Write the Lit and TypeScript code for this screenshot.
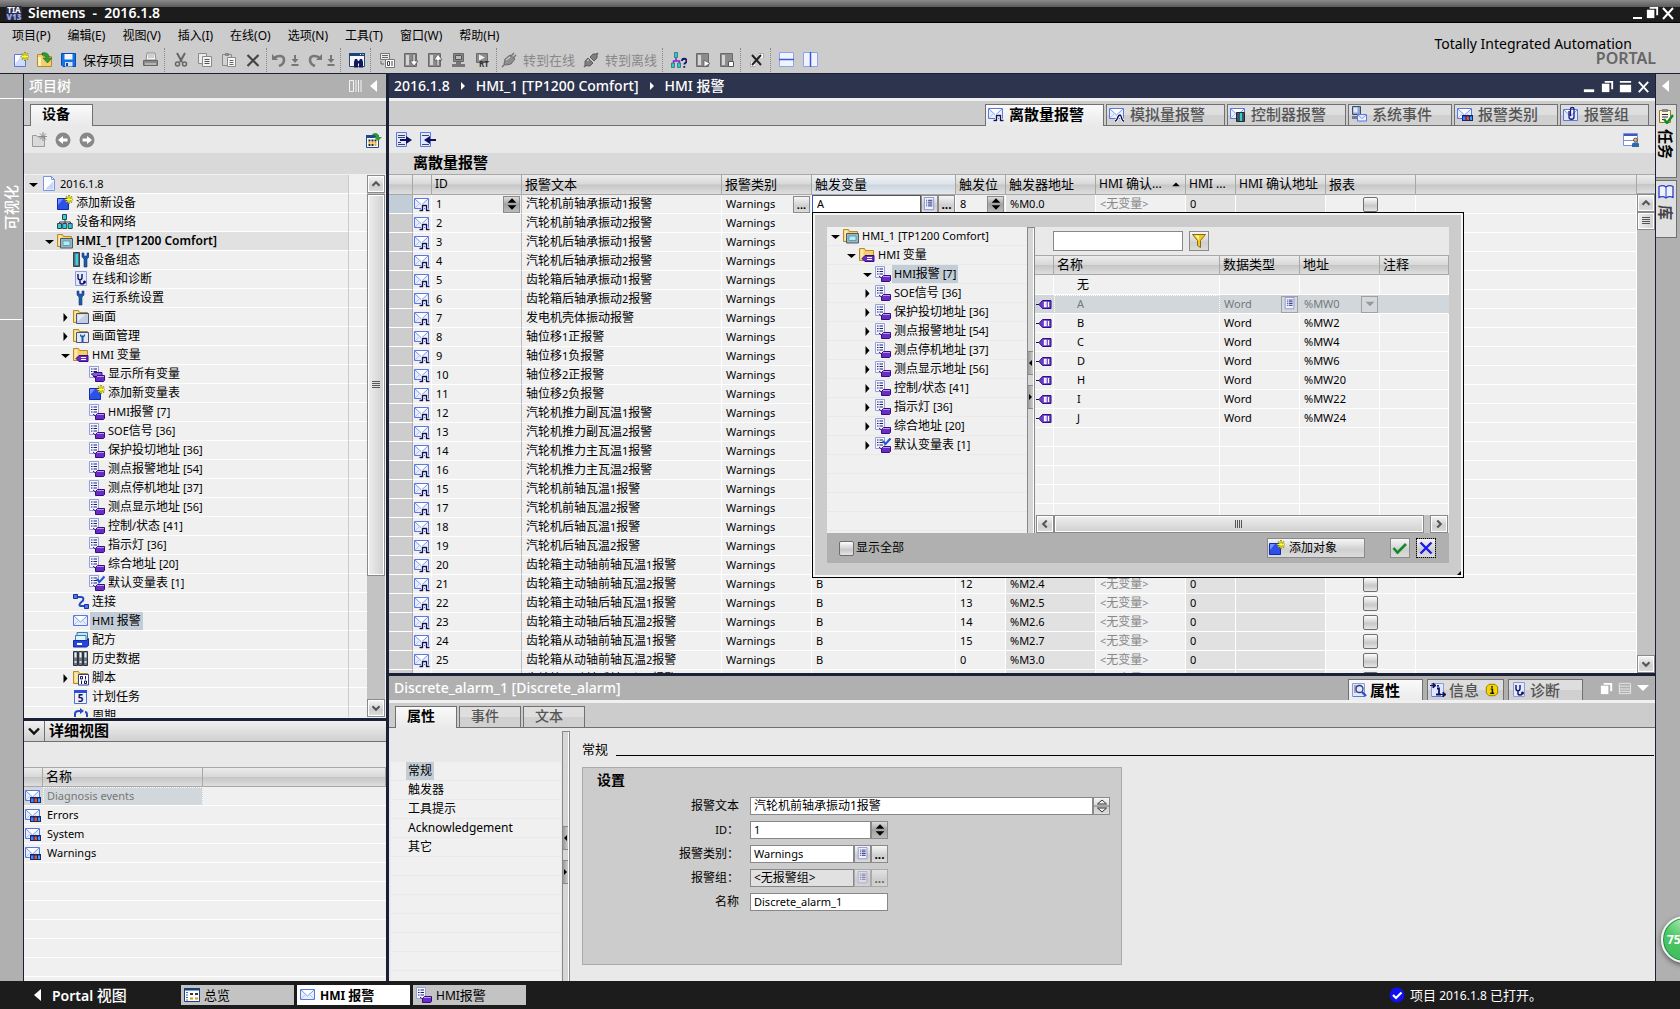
import { LitElement, html, svg, css, nothing, TemplateResult, SVGTemplateResult } from "lit";
import { customElement, property, state } from "lit/decorators.js";
import { classMap } from "lit/directives/class-map.js";
import { styleMap } from "lit/directives/style-map.js";

/* ---------- icon fragments ---------- */

const env = svg`<path d="M.5 2.500h14v10H.5z" fill="#e6eeff" stroke="#5b78e0"/><path d="M1 3l6.500 6L14 3" fill="#fff" stroke="#7a95ee"/><path d="M1 12l4.500-4.500M14 12L9.500 7.500" stroke="#b5c5f7" fill="none"/>`;
const sheet = svg`<path d="M.5 .5h9v11h-9z" fill="#f4f6ff" stroke="#93a0dc"/><path d="M2 3h1.500M2 5.500h1.500M2 8h1.500M4.500 3H8M4.500 5.500H8M4.500 8H8" stroke="#1d1d6e"/>`;
const tagBlock = svg`<path d="M4 10l3 2.500" stroke="#31107e"/><path d="M6.500 11.500l2-2h7v5l-1 1h-8z" fill="#6a2cc4" stroke="#31107e"/><path d="M8 10.500h7" stroke="#b99af0"/>`;
const folder = svg`<path d="M.5 13.500v-12h5l1 2h8v10z" fill="#f3cf6d" stroke="#b98a1e"/><path d="M1.500 2.500h3v10h-3z" fill="#fbe9ad"/>`;
const star = svg`<path d="M12 0v9M7.500 4.500h9M9 1.500l6 6M15 1.500l-6 6" stroke="#8a8400" stroke-width="1.600"/><path d="M12 1v7M8.500 4.500h7M9.500 2l5 5M14.500 2l-5 5" stroke="#ffff3a"/>`;
const wrench = svg`<path d="M2 0v4l2 2v8h3V6l2-2V0H7v3H4V0z" fill="#1e5aa8" stroke="#123a78" stroke-width=".6"/>`;
const grayBox = svg`<path d="M1.500 1.500h12v13h-12z" fill="#8b8b8b" stroke="#6a6a6a"/><path d="M3 3h3v10H3z" fill="#d5d5d5"/>`;
const page = svg`<path d="M1.500 1.500h12v13h-12z" fill="#dfe8ff" stroke="#8b9be0"/><path d="M2 14.500h12" stroke="#5b78e0"/>`;
const scope = svg`<path d="M4 3v3.500c0 3 4 3 4 0V3M6 9v2.500c0 2 4 2 4 0" fill="none" stroke="#12125e" stroke-width="1.400"/><circle cx="10.500" cy="11" r="1.500" fill="#12125e"/>`;

const ICONS: Record<string, SVGTemplateResult> = {
  envelope: svg`${env}`,
  alarm: svg`${env}<path d="M5.500 14.500h3v-5h4v5h3" stroke="#fff" stroke-width="3" fill="none"/><path d="M5.500 14.500h3v-5h4v5h3" stroke="#101050" stroke-width="1.400" fill="none"/>`,
  analog: svg`${env}<path d="M6 15c3 0 2-6 5-6 2 0 1 6 4 6" stroke="#fff" stroke-width="3" fill="none"/><path d="M6 15c3 0 2-6 5-6 2 0 1 6 4 6" stroke="#101050" stroke-width="1.400" fill="none"/>`,
  controller: svg`${env}<path d="M6.500 6.500h8v9h-8z" fill="#44525e" stroke="#1d2a34"/><path d="M10 7h2v8h-2z" fill="#2ad0d8"/>`,
  sysevent: svg`<path d="M1.500 .5h8v8h-8z" fill="#8fa3c8" stroke="#3b4a70"/><path d="M2.500 1.500h4v5h-4z" fill="#dfe8fa"/><path d="M1 10h9v3H1z" fill="#6c7b9c"/><path d="M6.500 8.500h9v6.500h-9z" fill="#e6eeff" stroke="#5b78e0"/><path d="M7 9l4 3.500L15 9" fill="none" stroke="#7a95ee"/>`,
  alarmclass: svg`${env}<path d="M5 9h11v6H5z" fill="#15296e"/><path d="M6 10.500h2.500v3.500H6z" fill="#4b7dff"/><path d="M9.500 10.500H12v3.500H9.500z" fill="#f0501e"/><path d="M13 10.500h2v3.500h-2z" fill="#3fa0ff"/>`,
  group: svg`<path d="M.5 3.500h14v11H.5z" fill="#dfe7ff" stroke="#5b78e0"/><path d="M1 4l6.500 6L14 4" fill="#fff" stroke="#7a95ee"/><path d="M7.500 10V3c0-2 3.500-2 3.500 0v8c0 3-5 3-5 0V5" fill="none" stroke="#1a1a78" stroke-width="1.300"/>`,
  tagtable: svg`${sheet}${tagBlock}`,
  tagdefault: svg`${sheet}${tagBlock}<path d="M8 4l2.500 3L15.500 1.500" fill="none" stroke="#1c55d8" stroke-width="2"/>`,
  tagall: svg`${sheet}<path d="M3 8.500l2-2h8v4H5z" fill="#8a56d8" stroke="#31107e"/>${tagBlock}`,
  tag: svg`<path d="M0 8.500h3" stroke="#101050"/><path d="M3 8.500l3.500-4H15v8H6.500z" fill="#6a3cc8" stroke="#2d0f80"/><path d="M8.500 6.500h1.500v4H8.500zM12.500 6v5" fill="none" stroke="#fff" stroke-width="1.300"/>`,
  add: svg`<path d="M.5 3.500h11v11H.5z" fill="#2c50e8" stroke="#1428b0"/><path d="M1 4h5L1 10z" fill="#6f92ff"/>${star}`,
  network: svg`<path d="M8 5v3M2.500 11V8h11v3M8 8v3" stroke="#33424e" fill="none"/><path d="M5.500 .5h4v5h-4zM.5 9.500h4v5h-4zM5.700 9.500h4v5h-4zM11.200 9.500h4v5h-4z" fill="#2fd0d2" stroke="#33424e"/>`,
  hmi: svg`${folder}<path d="M3.500 5.500h12v9.500h-12z" fill="#9fb3c0" stroke="#4a5a66"/><path d="M6 8h7v4.500H6z" fill="#a8f0fa" stroke="#4a8a9a" stroke-width=".7"/>`,
  devconf: svg`<path d="M.5 .5h6v14h-6z" fill="#5c6c78" stroke="#34424c"/><path d="M2.500 2h2.500v11H2.500z" fill="#2fd8e4"/><g transform="translate(7 1)">${wrench}</g>`,
  diag: svg`<path d="M2.500 .5h11v14h-11z" fill="#e2e9ff" stroke="#8b9be0"/><g transform="translate(1 0)">${scope}</g>`,
  wrench: svg`<g transform="translate(2 1)">${wrench}</g>`,
  fscreen: svg`${folder}<path d="M3.500 4.500h12v10h-12z" fill="#c3cfe6" stroke="#4a566e"/><path d="M4.500 5.500h8l-8 7z" fill="#e4ebf8"/>`,
  fwrench: svg`${folder}<path d="M3.500 4.500h12v10h-12z" fill="#e2e9f6" stroke="#4a566e"/><path d="M7 6v2l1.500 1.500V14h2V9.500L12 8V6l-1.500 1.500h-2z" fill="#1e5aa8"/>`,
  ftag: svg`${folder}<path d="M3 11.500l3-3h9v6H6z" fill="#6a2cc4" stroke="#31107e"/><path d="M8 10.500h5M8 12.500h5" stroke="#fff"/>`,
  connect: svg`<path d="M3 3h5c3 0 3 3 1 4.500S5 12 8 12h5" fill="none" stroke="#2448c8" stroke-width="2"/><path d="M.5 .5h4v4h-4zM11.500 10.500h4v4h-4z" fill="#4a78f0" stroke="#1a2fa0"/>`,
  recipe: svg`<path d="M4 .5h10.500v8H4z" fill="#bfe8f4" stroke="#3b7aa8"/><path d="M2.500 3.500h10.500v6H2.500z" fill="#def4fa" stroke="#3b7aa8"/><path d="M.5 8.500h13l2-2v7l-2 1.500H.5z" fill="#2346e0" stroke="#1428a0"/><path d="M4 11h5v2H4z" fill="#fff"/>`,
  history: svg`<path d="M.5 .5h4v14h-4zM5.500 .5h4v14h-4zM10.500 .5h4v14h-4z" fill="#6b7380" stroke="#2e343e"/><path d="M1.500 1.500h2v5h-2zM6.500 1.500h2v5h-2zM11.500 1.500h2v5h-2z" fill="#eef0f4"/><path d="M1.500 11h2M6.500 11h2M11.500 11h2" stroke="#d8dce4" stroke-width="2"/>`,
  script: svg`${folder}<path d="M5.500 4.500h10v10.500h-10z" fill="#fff" stroke="#33428e"/><path d="M7.500 6.500h2v2.500h-2zM12.500 6v3.500M8.500 10.500v3.500M11.500 11h2v2.500h-2z" fill="none" stroke="#12125e"/>`,
  schedule: svg`<path d="M1.500 1.500h12v13h-12z" fill="#eef2ff" stroke="#5b6fd0"/><path d="M1 1h13v3H1z" fill="#2b50e0"/><text x="7.500" y="13" font-size="10" font-weight="700" text-anchor="middle" fill="#12125e" font-family="Noto Sans, sans-serif">5</text>`,
  cycle: svg`<path d="M2 14V6c0-2 2-3 4-3h2M14 14V7c0-2-1-3-2-3" fill="none" stroke="#2448c8" stroke-width="2"/><path d="M7 0v6l4-3z" fill="#2448c8"/>`,
  doc: svg`<path d="M2.500 .5h8l3 3v11h-11z" fill="#fff" stroke="#7c93e4"/><path d="M10.500 .5v3h3" fill="none" stroke="#7c93e4"/><path d="M4 13.500L12.500 5v8.500z" fill="#c8d6fc"/>`,
  newp: svg`<path d="M1.500 2.500h11v12h-11z" fill="#cddcff" stroke="#5b78e0"/><path d="M2 3h7l-7 9z" fill="#fff"/>${star}`,
  newgray: svg`<path d="M1.500 14.500v-11h4l1 1.500h7v9.500z" fill="#dadada" stroke="#9a9a9a"/><path d="M12 0v9M7.500 4.500h9M9 1.500l6 6M15 1.500l-6 6" stroke="#8a8a8a"/>`,
  open: svg`<path d="M.5 14.500v-12h5l1 2h8v10z" fill="#f3cf6d" stroke="#b98a1e"/><path d="M1 5h3v9H1z" fill="#fdf0b8"/><path d="M5 1c6-1 7 2 7 5h3l-4.500 5L6 6h3c0-2-1-3-4-3z" fill="#2f9a38" stroke="#176a20" stroke-width=".6"/>`,
  save: svg`<path d="M.5 1.500h14v13H2l-1.500-1.500z" fill="#1672e0" stroke="#0b4ab0"/><path d="M3.500 2h8v5.500h-8z" fill="#f2f7ff"/><path d="M4 10h7.500v4.500H4z" fill="#cfe0f8"/><path d="M5 11h2v3H5z" fill="#0b4ab0"/>`,
  print: svg`<path d="M4 1h8l1 7H3z" fill="#f4f4f4" stroke="#8c8c8c"/><path d="M5 3h6M5 5h6" stroke="#aaa"/><path d="M.5 8.500h14v5H.5z" fill="#8a8a8a" stroke="#666"/><path d="M2 12h11" stroke="#e0e0e0"/>`,
  cut: svg`<path d="M4 1l5 9M12 1L7 10" stroke="#666" stroke-width="2" fill="none"/><circle cx="4.500" cy="12" r="2" fill="none" stroke="#666" stroke-width="1.500"/><circle cx="11.500" cy="12" r="2" fill="none" stroke="#666" stroke-width="1.500"/>`,
  copy: svg`<path d="M1.500 1.500h8v10h-8z" fill="#ececec" stroke="#8a8a8a"/><path d="M5.500 4.500h9v10h-9z" fill="#f4f4f4" stroke="#8a8a8a"/><path d="M7.500 7.500h5M7.500 9.500h5M7.500 11.500h5" stroke="#555"/>`,
  paste: svg`<path d="M1.500 2.500h9v11h-9z" fill="#d2d2d2" stroke="#8a8a8a"/><path d="M4 1h4v3H4z" fill="#8a8a8a"/><path d="M6.500 5.500h8v9h-8z" fill="#f8f8f8" stroke="#8a8a8a"/><path d="M8.500 8.500h4M8.500 10.500h4M8.500 12.500h4" stroke="#666"/>`,
  del: svg`<path d="M2.500 3l11 11M13.500 3l-11 11" stroke="#444" stroke-width="2.200"/>`,
  find: svg`<path d="M.5 1.500h15v13H.5z" fill="#f4f6fa" stroke="#2a4a7e"/><path d="M0 1h16v3H0z" fill="#17427e"/><path d="M11 2.500h1M13.500 2.500h1" stroke="#fff"/><path d="M5 15.500V10l1-3h2l1 2h1l1-2h2l1 3v5.500h-4v-4H9v4z" fill="#12185e"/>`,
  compile: svg`<path d="M1.500 1.500h9v6h-9z" fill="#ececec" stroke="#777"/><path d="M3 3.500h6M3 5.500h6M2 9v3h3" stroke="#666" fill="none"/><path d="M6.500 7.500h9v8h-9z" fill="#fff" stroke="#777"/><path d="M8.500 9.500h2v4h-2zM13 9v5" fill="none" stroke="#444"/>`,
  download: svg`${grayBox}<path d="M10 2v7H7l4 5 4-5h-3V2z" fill="#fff" stroke="#555" stroke-width=".8"/>`,
  upload: svg`${grayBox}<path d="M10 14V8H7l4-6 4 6h-3v6z" fill="#fff" stroke="#555" stroke-width=".8"/>`,
  simulate: svg`<path d="M2.500 1.500h10v8h-10z" fill="#888" stroke="#666"/><path d="M4.500 3.500h6v4h-6z" fill="#bbb" stroke="#555"/><path d="M5 10h5v2H5zM1 12h13v3H1z" fill="#777"/>`,
  rt: svg`<path d="M1.500 1.500h11v9h-11z" fill="#8b8b8b" stroke="#6a6a6a"/><path d="M4 2.500l6 3-6 3z" fill="#eee"/><text x="4" y="15" font-size="8" font-weight="700" fill="#333" font-family="Noto Sans, sans-serif">RT</text>`,
  plug: svg`<path d="M1 15l3-3M10 4l3-3M12 6l3-3" stroke="#777" stroke-width="1.600"/><path d="M3 12l1-5 5-4 5 4-4 5-5 1z" fill="#8f8f8f" stroke="#6c6c6c"/><path d="M5 8l4-3" stroke="#ddd"/>`,
  unplug: svg`<path d="M1 15l2-2M13 3l2-2" stroke="#666" stroke-width="1.600"/><path d="M2 13.500V9l3-3 5 5-3 3zM7 5l3-3h4v4l-3 3z" fill="#7f7f7f" stroke="#5c5c5c"/><path d="M4 9l2-1.500" stroke="#ddd"/>`,
  access: svg`<path d="M5 6v3M2.500 12V9h6v3" stroke="#8a1fd0" stroke-width="1.500" fill="none"/><path d="M3.500 .5h3v5h-3zM.5 11h3v4.500h-3zM6.500 11h3v4.500h-3z" fill="#2fc8d0" stroke="#28707c" stroke-width=".8"/><path d="M11 9c0-3 4.500-3 4.500 0 0 2-2.200 2-2.200 3.500M13.300 14v1.800" stroke="#14146a" stroke-width="1.800" fill="none"/>`,
  start: svg`${grayBox}<path d="M9 8l6 3.500L9 15z" fill="#fff" stroke="#555" stroke-width=".8"/>`,
  stop: svg`${grayBox}<path d="M9.500 9.500h5v5h-5z" fill="#fff" stroke="#555"/>`,
  xref: svg`<path d="M9.500 1.500h5v5M1.500 9.500v5h5" fill="#fff" stroke="#aaa"/><path d="M10 2h4v4h-4zM2 10h4v4H2z" fill="#fff"/><path d="M3 3l9 10M12 3L3 13" stroke="#222" stroke-width="2"/>`,
  splith: svg`<path d="M.5 .5h14v14H.5z" fill="#f0f4ff" stroke="#8fa4e8"/><path d="M0 7.500h15" stroke="#3a58d8" stroke-width="1.500"/>`,
  splitv: svg`<path d="M.5 .5h14v14H.5z" fill="#f0f4ff" stroke="#8fa4e8"/><path d="M7.500 0v15" stroke="#3a58d8" stroke-width="1.500"/>`,
  back: svg`<circle cx="8" cy="8" r="7.500" fill="#888"/><path d="M12.500 6.500H8V4L3 8l5 4V9.500h4.500z" fill="#fff"/>`,
  fwd: svg`<circle cx="8" cy="8" r="7.500" fill="#888"/><path d="M3.500 6.500H8V4l5 4-5 4V9.500H3.500z" fill="#fff"/>`,
  calendar: svg`<path d="M.5 3.500h12v12H.5z" fill="#fff" stroke="#1d4a8c"/><path d="M0 3h13v3H0z" fill="#1d4a8c"/><path d="M2.500 8.500h2M5.500 8.500h2M8.500 8.500h2M2.500 13h2M5.500 13h2" stroke="#222" stroke-width="2"/><path d="M2.500 10.800h2M5.500 10.800h2M8.500 10.800h2M8.500 13h2" stroke="#f0a010" stroke-width="2"/><path d="M6 3c1-3 7-3 7 2h3l-4 4-4-4h2c0-2-2-2-4-2z" fill="#2f9a38"/>`,
  insert: svg`<path d="M.5 .5h10v14H.5z" fill="#dfe8ff" stroke="#5b78e0"/><path d="M2 3.500h7M2 5.500h7M2 10.500h3M2 12.500h7" stroke="#445"/><path d="M4 7h6V4l6 4-6 4V9H4z" fill="#101060"/>`,
  remove: svg`<path d="M.5 .5h10v14H.5z" fill="#dfe8ff" stroke="#5b78e0"/><path d="M2 3.500h7M2 12.500h7" stroke="#445"/><path d="M16 7h-6V4L4 8l6 4V9h6z" fill="#101060"/>`,
  viewcfg: svg`<path d="M.5 1.500h14v12H.5z" fill="#fff" stroke="#7d8fd8"/><path d="M1 3h13" stroke="#3a58c8" stroke-width="2"/><path d="M1 8.500h13" stroke="#7d8fd8"/><circle cx="12.500" cy="8" r="2" fill="#e8b070" stroke="#333" stroke-width=".7"/><path d="M9 15v-3c0-2 7-2 7 0v3z" fill="#2c6aa8"/>`,
  list: svg`<path d="M2.500 .5h10v13h-10z" fill="#eef1ff" stroke="#8390d8"/><path d="M4.500 3.500h1M4.500 5.500h1M4.500 7.500h1M4.500 9.500h1M6.500 3.500H11M6.500 5.500H11M6.500 7.500H11M6.500 9.500H11" stroke="#22226e"/>`,
  filter: svg`<path d="M1.500 1.500h13l-5 6v7l-3-2v-5z" fill="#f0cc20" stroke="#8a6a08"/><path d="M4 2.500h4v5z" fill="#fff3a0"/>`,
  ok: svg`<path d="M1.500 8l4 4.500L14 4" fill="none" stroke="#118a2a" stroke-width="2.600"/>`,
  cancel: svg`<path d="M2.500 2.500l11 11M13.500 2.500l-11 11" stroke="#1a1af0" stroke-width="2.400"/>`,
  props: svg`${page}<path d="M3 4h3M3 6h2M3 8h2M3 10h3" stroke="#667"/><circle cx="8.500" cy="7" r="3.500" fill="#dfe9ff" stroke="#333a70" stroke-width="1.300"/><path d="M11 10l4 4" stroke="#2458b8" stroke-width="2.400"/>`,
  info: svg`${page}<path d="M0 3.500h4M3 1l3 2.500L3 6zM11 12.500h3M13 10l3 2.500-3 2.500z" fill="#101060" stroke="#101060"/><path d="M7 6.500h2v6M6 12.500h5M8 3v1.800" stroke="#101060" stroke-width="1.800" fill="none"/>`,
  warn: svg`<path d="M4.500 1.500h7l3 3v7l-3 3h-7l-3-3v-7z" fill="#f7d400" stroke="#8a7400"/><path d="M6.500 7H8.500v4.500M6 11.700h4.500M8 3.500v2" stroke="#111" stroke-width="1.700" fill="none"/>`,
  overview: svg`<path d="M.5 1.500h15v13H.5z" fill="#fff" stroke="#17427e"/><path d="M0 1h16v2.500H0z" fill="#17427e"/><path d="M2 5.500h2M2 8h2M2 10.500h2M2 13h2" stroke="#3a6ab0"/><path d="M6 6h3v2H6zM11 6h3v2h-3z" fill="#333"/><path d="M6 10.500h3v2H6zM11 10.500h3v2h-3z" fill="#e09010"/>`,
  done: svg`<circle cx="8" cy="8" r="7.500" fill="#1010f0"/><path d="M4 8l3 3 5.500-5.500" fill="none" stroke="#fff" stroke-width="2.200"/>`,
  task: svg`<path d="M1.500 2.500h11v12h-11z" fill="#fff8d8" stroke="#9a7a28"/><path d="M4 1h6v3H4z" fill="#888"/><path d="M4 6.500h6M4 9h6M4 11.500h3" stroke="#22226e"/><path d="M6 11l3 4 6-8" fill="none" stroke="#118a2a" stroke-width="2.400"/>`,
  book: svg`<path d="M8 3C6 1.500 3 1.500 1 2.500v11c2-1 5-1 7 .5 2-1.500 5-1.500 7-.5v-11C13 1.500 10 1.500 8 3z" fill="#eef2ff" stroke="#2b3fc8" stroke-width="1.300"/><path d="M8 3v11" stroke="#2b3fc8"/>`,
  triL: svg`<path d="M11 2v12L4 8z" fill="currentColor"/>`,
  triR: svg`<path d="M6 4v8l4-4z" fill="currentColor"/>`,
  triD: svg`<path d="M2 5h12l-6 6z" fill="currentColor"/>`,
  triU: svg`<path d="M3 11h10L8 6z" fill="currentColor"/>`,
  nodeR: svg`<path d="M6.500 4v9l4-4.500z" fill="#000"/>`,
  nodeD: svg`<path d="M4 7h9l-4.500 4z" fill="#000"/>`,
  chevU: svg`<path d="M4 10l4-4 4 4" fill="none" stroke="#555" stroke-width="2.400"/>`,
  chevD: svg`<path d="M4 6l4 4 4-4" fill="none" stroke="#555" stroke-width="2.400"/>`,
  chevL: svg`<path d="M10 4L6 8l4 4" fill="none" stroke="#555" stroke-width="2.400"/>`,
  chevR: svg`<path d="M6 4l4 4-4 4" fill="none" stroke="#555" stroke-width="2.400"/>`,
  chevB: svg`<path d="M3 5.500l5 5 5-5" fill="none" stroke="#111" stroke-width="2.400"/>`,
  spin: svg`<path d="M3 6.500h10L8 1.500zM3 9.500h10l-5 5z" fill="#000"/>`,
  expand: svg`<path d="M0 8h16" stroke="#777"/><path d="M3.500 6h9L8 2zM3.500 10h9L8 14z" fill="#eee" stroke="#333"/>`,
  min: svg`<path d="M2 11h11v3H2z" fill="#fff"/>`,
  minthin: svg`<path d="M4 12h9v2H4z" fill="#fff"/>`,
  restore: svg`<path d="M5 2h9v9h-2V4H5z" fill="#fff"/><path d="M2 5h8v9H2z" fill="#fff"/>`,
  max: svg`<path d="M2 2h12v2H2zM2 6h12v8H2z" fill="#fff"/>`,
  close: svg`<path d="M3 3l10 11M13 3L3 14" stroke="#fff" stroke-width="2"/>`,
  lines: svg`<path d="M2.500 2.500h12v11h-12zM2 5.500h12M2 8.500h12M2 11h12" fill="none" stroke="#e8e8e8"/>`,
  columns: svg`<path d="M2.500 2.500h4v11h-4zM9 2v12M11.500 2v12M14 2v12" fill="none" stroke="#f4f4f4"/>`,
};

const icon = (name: string, size = 16) =>
  html`<svg class="ico" width=${size} height=${size} viewBox="0 0 16 16" aria-hidden="true">${ICONS[name]}</svg>`;

/* Latin runs are set one pixel smaller than the Chinese text around them. */
const mix = (text: string) =>
  text.split(/([\x20-\x7e]+)/).filter(Boolean).map((part) =>
    /^[\x20-\x7e]/.test(part) ? html`<span class="la">${part}</span>` : part);

const shared = css`
  :host { display: block; box-sizing: border-box; font: 12px/18px "Noto Sans", "Noto Sans CJK SC", sans-serif; color: #000; }
  *, *::before, *::after { box-sizing: border-box; }
  button, input, select { font: inherit; color: inherit; margin: 0; padding: 0; border-radius: 0; }
  button { background: none; border: 0; white-space: nowrap; }
  .ico { display: block; flex: none; }
  .la { font-size: 11px; }
  .fill { flex: 1; min-width: 0; }
  .head { display: flex; align-items: center; height: 24px; padding: 0 4px 0 5px; color: #fff; background: #b0b0b0; font-size: 14px; font-weight: 500; flex: none; }
  .head .la { font-size: 14px; }
  .head.dark { background: #2d344d; }
  .head button { margin-left: 3px; }
  .tabs { display: flex; align-items: flex-end; gap: 2px; height: 28px; border-top: 3px solid #f0f0f0; border-bottom: 1px solid #707070; background: #ccc; flex: none; }
  .tab { display: flex; align-items: center; gap: 5px; height: 21px; padding-bottom: 2px; border: 1px solid #707070; border-bottom: 0; background: linear-gradient(#dedede 50%, #d0d0d0 50%); color: #555; font-size: 15px; font-weight: 500; line-height: 18px; }
  .tab.on { background: linear-gradient(#fafafa, #e9e9e9); color: #000; font-weight: 700; height: 22px; margin-bottom: -1px; padding-bottom: 3px; }
  .btn { display: flex; align-items: center; justify-content: center; border: 1px solid #8a8a8a; background: linear-gradient(#f6f6f6, #cfcfcf 60%, #dcdcdc); }
  .btn.spin { background: linear-gradient(#dcdcdc, #a2a2a2 50%, #bcbcbc); }
  .dots { align-items: flex-end; line-height: 14px; font-weight: 700; }
  .sb { display: flex; flex-direction: column; width: 18px; background: #c3c3c3; flex: none; }
  .sb.h { flex-direction: row; width: auto; height: 18px; }
  .sb .btn { width: 18px; height: 18px; flex: none; box-shadow: inset 0 0 0 1px #fff; }
  .thumb { display: flex; align-items: center; justify-content: center; border: 1px solid #8a8a8a; box-shadow: inset 0 0 0 1px #fff; background: linear-gradient(90deg, #eee, #d0d0d0); }
  .thumb::after { content: ""; width: 8px; height: 8px; background: repeating-linear-gradient(#555 0 1px, transparent 1px 2px); }
  .sb.h .thumb { background: linear-gradient(#eee, #d0d0d0); }
  .sb.h .thumb::after { background: repeating-linear-gradient(90deg, #555 0 1px, transparent 1px 2px); }
  table { border-collapse: separate; border-spacing: 0; table-layout: fixed; width: 100%; }
  th { height: 20px; padding: 0 3px 2px; text-align: left; font-weight: 400; font-size: 13px; line-height: 16px; border: 1px solid #a8a8a8; border-left: 0; white-space: nowrap; overflow: hidden; background: linear-gradient(#ececec, #d8d8d8 48%, #c6c6c6 52%, #dedede); }
  th .la { font-size: 12px; }
  td { height: 19px; padding: 0 4px; border-right: 1px solid #fff; border-bottom: 1px solid #fff; line-height: 18px; white-space: nowrap; overflow: hidden; }
  td.ic, th.ic { padding: 0 1px; }
  input[type="checkbox"] { appearance: none; display: block; width: 15px; height: 15px; border: 1px solid #6e6e6e; border-radius: 2px; background: linear-gradient(#fdfdfd, #c8c8c8 60%, #e6e6e6); }
  .split { display: flex; flex-direction: column; justify-content: center; gap: 10px; width: 8px; padding-bottom: 2px; border: 1px solid #888; border-bottom: 0; box-shadow: inset -1px 0 #fff; background: #d6d6d6; flex: none; }
  .grip { display: flex; align-items: center; justify-content: center; width: 5px; height: 24px; padding: 0; border: solid #888; border-width: 1px 0; background: linear-gradient(90deg, #9a9a9a, #ccc); }
`;

/* ---------- tree ---------- */

interface Node { level: number; icon: string; label: string; open?: boolean; bold?: boolean; shade?: boolean; selected?: boolean; }
const n = (level: number, iconName: string, label: string, extra: Partial<Node> = {}): Node => ({ level, icon: iconName, label, ...extra });

const TAG_TABLES = ["SOE信号 [36]", "保护投切地址 [36]", "测点报警地址 [54]", "测点停机地址 [37]", "测点显示地址 [56]", "控制/状态 [41]", "指示灯 [36]", "综合地址 [20]"];

const PROJECT: Node[] = [
  n(0, "doc", "2016.1.8", { open: true, shade: true }),
  n(1, "add", "添加新设备"),
  n(1, "network", "设备和网络"),
  n(1, "hmi", "HMI_1 [TP1200 Comfort]", { open: true, bold: true, shade: true }),
  n(2, "devconf", "设备组态"),
  n(2, "diag", "在线和诊断"),
  n(2, "wrench", "运行系统设置"),
  n(2, "fscreen", "画面", { open: false }),
  n(2, "fwrench", "画面管理", { open: false }),
  n(2, "ftag", "HMI 变量", { open: true }),
  n(3, "tagall", "显示所有变量"),
  n(3, "add", "添加新变量表"),
  n(3, "tagtable", "HMI报警 [7]"),
  ...TAG_TABLES.map((t) => n(3, "tagtable", t)),
  n(3, "tagdefault", "默认变量表 [1]"),
  n(2, "connect", "连接"),
  n(2, "envelope", "HMI 报警", { selected: true }),
  n(2, "recipe", "配方"),
  n(2, "history", "历史数据"),
  n(2, "script", "脚本", { open: false }),
  n(2, "schedule", "计划任务"),
  n(2, "cycle", "周期"),
];

const PICKER: Node[] = [
  n(0, "hmi", "HMI_1 [TP1200 Comfort]", { open: true }),
  n(1, "ftag", "HMI 变量", { open: true }),
  n(2, "tagtable", "HMI报警 [7]", { open: true, selected: true }),
  ...TAG_TABLES.map((t) => n(2, "tagtable", t, { open: false })),
  n(2, "tagdefault", "默认变量表 [1]", { open: false }),
];

@customElement("nav-tree")
class NavTree extends LitElement {
  static styles = [shared, css`
    :host { overflow: hidden; background: repeating-linear-gradient(#f0f0f0 0 18px, var(--rule, #fff) 18px 19px); }
    .row { display: flex; align-items: center; height: 19px; border-bottom: 1px solid var(--rule, #fff); }
    .row.shade { background: #e1e1e1; }
    .twist { width: 16px; flex: none; }
    .label { margin-left: 1px; padding: 0 2px; white-space: nowrap; }
    .bold { font-weight: 600; }
    .bold .la { font-size: 12px; }
    .selected { background: #c3cdd7; }
  `];
  @property({ attribute: false }) nodes: Node[] = [];

  render() {
    return html`<div role="tree">${this.nodes.map((d) => html`
      <div class=${classMap({ row: true, shade: !!d.shade })} role="treeitem" aria-selected=${d.selected ? "true" : "false"} style=${styleMap({ paddingLeft: `${d.level * 16}px` })}>
        <span class="twist">${d.open === undefined ? nothing : icon(d.open ? "nodeD" : "nodeR")}</span>
        ${icon(d.icon)}
        <span class=${classMap({ label: true, bold: !!d.bold, selected: !!d.selected })}>${mix(d.label)}</span>
      </div>`)}</div>`;
  }
}

const splitter = html`
  <div class="split">
    <button class="grip" aria-label="向左折叠"><svg width="5" height="8" viewBox="0 0 5 8"><path d="M4 1v6L1 4z"/></svg></button>
    <button class="grip" aria-label="向右折叠"><svg width="5" height="8" viewBox="0 0 5 8"><path d="M1 1v6l3-3z"/></svg></button>
  </div>`;

/* ---------- tag picker ---------- */

const TAGS: [string, string][] = [["A", "%MW0"], ["B", "%MW2"], ["C", "%MW4"], ["D", "%MW6"], ["H", "%MW20"], ["I", "%MW22"], ["J", "%MW24"]];

@customElement("tag-picker")
class TagPicker extends LitElement {
  static styles = [shared, css`
    :host { display: flex; flex-direction: column; padding: 14px; border: 1px solid #000; background: #ccc; box-shadow: inset 0 0 0 2px #f6f6f6; }
    .panes { display: flex; flex: 1; min-height: 0; background: #e9e9e9; }
    nav-tree { width: 200px; flex: none; --rule: #e9e9e9; }
    .right { display: flex; flex-direction: column; flex: 1; min-width: 0; }
    .search { display: flex; gap: 6px; height: 28px; padding: 4px 18px; flex: none; }
    .search input { width: 130px; height: 20px; border: 1px solid #888; background: #fff; }
    .search .btn { width: 20px; height: 20px; }
    .grid { flex: 1; min-height: 0; overflow: hidden; background: #f0f0f0; }
    .grid th { height: 19px; }
    .c1 { width: 19px; } .c2 { width: 166px; } .c3, .c4 { width: 80px; }
    .name { padding-left: 23px; }
    .sel td { background: #d2d7dc; color: #777; border-right-color: #d2d7dc; }
    .sel .name { outline: 1px dotted #fff; outline-offset: -1px; }
    .with { display: flex; justify-content: space-between; align-items: center; margin-right: -3px; }
    .with .btn { width: 17px; height: 17px; background: #d4d8dc; border-color: #a0a0a0; color: #999; }
    tr:first-child td { height: 20px; }
    .sb { margin: 0 1px; }
    .sb.h .thumb { flex: 1; margin: 0 6px 0 0; }
    .foot { display: flex; align-items: center; height: 30px; padding: 0 13px 0 12px; background: #b0b0b0; flex: none; }
    .foot label { padding-left: 2px; }
    .foot .btn { width: 20px; height: 20px; }
    .foot .add { width: 98px; justify-content: flex-start; gap: 4px; padding-left: 1px; margin-right: 25px; }
    .foot .last { margin-left: 6px; outline: 1px dotted #000; outline-offset: -1px; }
    .resize { position: absolute; right: 2px; bottom: 2px; border: solid #000; border-width: 0 0 4px 4px; border-left-color: transparent; }
  `];

  render() {
    return html`
      <div class="panes">
        <nav-tree .nodes=${PICKER}></nav-tree>
        ${splitter}
        <div class="right">
          <div class="search">
            <input type="text" aria-label="筛选">
            <button class="btn" aria-label="应用筛选">${icon("filter")}</button>
          </div>
          <div class="grid">
            <table>
              <colgroup><col class="c1"><col class="c2"><col class="c3"><col class="c4"><col></colgroup>
              <thead><tr><th></th><th>名称</th><th>数据类型</th><th>地址</th><th>注释</th></tr></thead>
              <tbody>
                <tr><td class="ic"></td><td class="name">无</td><td></td><td></td><td></td></tr>
                ${TAGS.map(([name, addr], i) => html`
                  <tr class=${i === 0 ? "sel" : ""}>
                    <td class="ic">${icon("tag")}</td>
                    <td class="name la">${name}</td>
                    <td class="la">${i ? "Word" : html`<span class="with">Word<button class="btn" aria-label="选择类型">${icon("list", 14)}</button></span>`}</td>
                    <td class="la">${i ? addr : html`<span class="with">${addr}<button class="btn" aria-label="编辑地址">${icon("triD", 12)}</button></span>`}</td>
                    <td></td>
                  </tr>`)}
                ${Array.from({ length: 5 }, () => html`<tr><td></td><td></td><td></td><td></td><td></td></tr>`)}
              </tbody>
            </table>
          </div>
          <div class="sb h">
            <button class="btn" aria-label="向左滚动">${icon("chevL", 14)}</button>
            <div class="thumb"></div>
            <button class="btn" aria-label="向右滚动">${icon("chevR", 14)}</button>
          </div>
        </div>
      </div>
      <div class="foot">
        <input type="checkbox" id="all"><label for="all">显示全部</label>
        <span class="fill"></span>
        <button class="btn add">${icon("add")}<span>添加对象</span></button>
        <button class="btn" aria-label="确定">${icon("ok")}</button>
        <button class="btn last" aria-label="取消">${icon("cancel")}</button>
      </div>
      <span class="resize"></span>`;
  }
}

/* ---------- alarm table ---------- */

const ALARMS: [number, string][] = [
  [1, "汽轮机前轴承振动1报警"], [2, "汽轮机前轴承振动2报警"], [3, "汽轮机后轴承振动1报警"], [4, "汽轮机后轴承振动2报警"],
  [5, "齿轮箱后轴承振动1报警"], [6, "齿轮箱后轴承振动2报警"], [7, "发电机壳体振动报警"], [8, "轴位移1正报警"],
  [9, "轴位移1负报警"], [10, "轴位移2正报警"], [11, "轴位移2负报警"], [12, "汽轮机推力副瓦温1报警"],
  [13, "汽轮机推力副瓦温2报警"], [14, "汽轮机推力主瓦温1报警"], [16, "汽轮机推力主瓦温2报警"], [15, "汽轮机前轴瓦温1报警"],
  [17, "汽轮机前轴瓦温2报警"], [18, "汽轮机后轴瓦温1报警"], [19, "汽轮机后轴瓦温2报警"], [20, "齿轮箱主动轴前轴瓦温1报警"],
  [21, "齿轮箱主动轴前轴瓦温2报警"], [22, "齿轮箱主动轴后轴瓦温1报警"], [23, "齿轮箱主动轴后轴瓦温2报警"],
  [24, "齿轮箱从动轴前轴瓦温1报警"], [25, "齿轮箱从动轴前轴瓦温2报警"], [26, "齿轮箱从动轴后轴瓦温1报警"],
];

/* Bits 8–15 live in the low address byte, bits 0–7 in the next one. */
const trigger = (i: number) => {
  const word = Math.floor(i / 16);
  const k = i % 16;
  return { tag: word === 0 ? "A" : "B", bit: (k + 8) % 16, addr: `%M${word * 2 + (k < 8 ? 0 : 1)}.${k % 8}` };
};

@customElement("alarm-table")
class AlarmTable extends LitElement {
  static styles = [shared, css`
    :host { display: flex; overflow: hidden; background: #f0f0f0; }
    .scroll { flex: 1; min-width: 0; overflow: hidden; }
    .side { display: flex; flex-direction: column; width: 18px; flex: none; }
    .cap { height: 20px; border: solid #a8a8a8; border-width: 1px 0; background: linear-gradient(#ececec, #d8d8d8 48%, #c6c6c6 52%, #dedede); flex: none; }
    .sb { flex: 1; }
    .sb .thumb { height: 18px; }
    .w24 { width: 24px; } .w19 { width: 19px; } .w50 { width: 50px; } .w90 { width: 90px; } .w144 { width: 144px; } .w200 { width: 200px; }
    .rh { background: #cdcdcd; border-right-color: #aaa; }
    tr:first-child .rh { background: #c3cdd7; }
    .id { border-right-color: #bbb; }
    .ro { background: #e1e1e1; }
    .gray { color: #888; }
    th.hot { background: linear-gradient(#eef2f6, #dde3ea 48%, #ccd4dc 52%, #e2e8ee); }
    .sort { display: flex; justify-content: space-between; align-items: center; }
    .tools { display: flex; align-items: center; justify-content: space-between; margin-right: -3px; }
    .tools .btn { width: 17px; height: 17px; }
    .edit { padding: 0; }
    .editor { display: flex; height: 18px; }
    .editor input { flex: 1; min-width: 0; padding-left: 4px; border: 1px solid #555; border-left: 1px solid #2a5ad0; background: #fff; font-size: 11px; }
    .editor .btn { width: 17px; height: 18px; }
    .check { padding: 0 37px; }
  `];

  private spin(label: string) {
    return html`<button class="btn spin" aria-label=${label}>${icon("spin", 14)}</button>`;
  }

  render() {
    const widths = ["w24", "w19", "w90", "w200", "w90", "w144", "w50", "w90", "w90", "w50", "w90", "w90", ""];
    return html`
      <div class="scroll"><table>
        <colgroup>${widths.map((w) => html`<col class=${w}>`)}</colgroup>
        <thead><tr>
          <th></th><th></th><th>${mix("ID")}</th><th>报警文本</th><th>报警类别</th><th class="hot">触发变量</th><th>触发位</th><th>触发器地址</th>
          <th><span class="sort"><span>${mix("HMI 确认...")}</span>${icon("triU", 12)}</span></th>
          <th>${mix("HMI ...")}</th><th>${mix("HMI 确认地址")}</th><th>报表</th><th></th>
        </tr></thead>
        <tbody>${ALARMS.map(([id, text], i) => {
          const t = trigger(i);
          const first = i === 0;
          return html`<tr>
            <td class="rh"></td>
            <td class="ic">${icon("alarm")}</td>
            <td class="id la">${first ? html`<span class="tools">${id}${this.spin("调整 ID")}</span>` : id}</td>
            <td>${mix(text)}</td>
            <td class="la">${first ? html`<span class="tools">Warnings<button class="btn dots" aria-label="选择类别">...</button></span>` : "Warnings"}</td>
            ${first ? html`<td class="edit"><div class="editor">
              <input type="text" aria-label="触发变量" .value=${t.tag}>
              <button class="btn" aria-label="变量列表">${icon("list", 15)}</button><button class="btn dots" aria-label="浏览">...</button>
            </div></td>` : html`<td class="la">${t.tag}</td>`}
            <td class="la">${first ? html`<span class="tools">${t.bit}${this.spin("调整触发位")}</span>` : t.bit}</td>
            <td class="la ro">${t.addr}</td>
            <td class="gray">${mix("<无变量>")}</td>
            <td class="la ro">0</td>
            <td class="ro"></td>
            <td class="check"><input type="checkbox" aria-label="报表 ${id}"></td>
            <td></td>
          </tr>`;
        })}</tbody>
      </table></div>
      <div class="side">
        <div class="cap"></div>
        <div class="sb">
          <button class="btn" aria-label="向上滚动">${icon("chevU", 14)}</button>
          <div class="thumb"></div>
          <span class="fill"></span>
          <button class="btn" aria-label="向下滚动">${icon("chevD", 14)}</button>
        </div>
      </div>`;
  }
}

/* ---------- inspector ---------- */

@customElement("alarm-inspector")
class AlarmInspector extends LitElement {
  static styles = [shared, css`
    :host { display: flex; flex-direction: column; background: #e9e9e9; }
    .head { align-items: stretch; line-height: 24px; }
    .views { display: flex; align-items: flex-end; gap: 1px; margin-right: 13px; }
    .views .tab { gap: 3px; padding: 0 4px 1px 2px; min-width: 75px; }
    .views .tab.on { margin-bottom: -3px; height: 24px; padding-bottom: 4px; }
    .tabs { padding-left: 6px; }
    .tabs .tab { width: 62px; padding-left: 11px; font-size: 14px; }
    .body { display: flex; flex: 1; min-height: 0; }
    .nav { width: 173px; padding: 34px 1px 0 2px; flex: none; }
    .nav ul { margin: 0; padding: 0; height: 100%; list-style: none; overflow: hidden; background: repeating-linear-gradient(#f0f0f0 0 18px, #e9e9e9 18px 19px); }
    .nav li { height: 19px; padding-left: 15px; }
    .nav a { display: inline-block; padding: 0 2px; color: inherit; text-decoration: none; line-height: 18px; }
    .nav a .la { font-size: 12px; }
    .nav a.on { background: #c3cdd7; }
    .split { margin-top: 3px; padding-bottom: 4px; }
    .page { flex: 1; min-width: 0; padding: 12px 1px 16px 12px; display: flex; flex-direction: column; }
    .title { display: flex; gap: 8px; font-size: 13px; line-height: 18px; }
    .title::after { content: ""; flex: 1; height: 16px; border-bottom: 1px solid #000; }
    fieldset { display: flex; flex-direction: column; gap: 6px; width: 540px; flex: 1; margin: 9px 0 0; padding: 3px 11px 5px 13px; border: 1px solid #aaa; background: #ccc; }
    h3 { margin: 0 0 2px; padding: 0 1px; font-size: 14px; line-height: 18px; }
    .field { display: grid; grid-template-columns: 143px minmax(0, auto); column-gap: 11px; height: 18px; justify-content: start; }
    .field:first-of-type { grid-template-columns: 143px 1fr; }
    .field label { text-align: right; }
    .ctl { display: flex; width: 138px; height: 18px; }
    .field:first-of-type .ctl { width: auto; }
    .ctl input { flex: 1; min-width: 0; border: 1px solid #888; background: #fff; padding: 0 3px; font-size: 11px; }
    .ctl input.cjk { font-size: 12px; }
    .ctl input:disabled { background: #e1e1e1; color: #000; }
    .ctl .btn { width: 17px; }
    .ctl .btn:disabled { opacity: .5; }
  `];
  @state() private tab = 0;

  render() {
    const tabs = ["属性", "事件", "文本"];
    const list = (off = false) => html`<button class="btn" ?disabled=${off} aria-label="列表">${icon("list", 14)}</button><button class="btn dots" ?disabled=${off} aria-label="浏览">...</button>`;
    return html`
      <div class="head">
        <span class="fill">${mix("Discrete_alarm_1 [Discrete_alarm]")}</span>
        <div class="views">
          <button class="tab on">${icon("props")}<span>属性</span></button>
          <button class="tab">${icon("info")}<span>信息</span><span class="fill"></span>${icon("warn", 14)}</button>
          <button class="tab">${icon("diag")}<span>诊断</span></button>
        </div>
        <button aria-label="浮动">${icon("restore", 15)}</button><button aria-label="布局">${icon("lines", 15)}</button><button aria-label="折叠">${icon("triD")}</button>
      </div>
      <div class="tabs">${tabs.map((t, i) => html`<button class=${classMap({ tab: true, on: i === this.tab })} @click=${() => (this.tab = i)}>${t}</button>`)}</div>
      <div class="body">
        <nav class="nav"><ul>
          ${["常规", "触发器", "工具提示", "Acknowledgement", "其它"].map((t, i) => html`<li><a href="#" class=${i ? "" : "on"}>${mix(t)}</a></li>`)}
        </ul></nav>
        ${splitter}
        <div class="page">
          <div class="title">常规</div>
          <fieldset>
            <h3>设置</h3>
            <div class="field"><label for="f1">报警文本</label><div class="ctl"><input id="f1" class="cjk" type="text" value="汽轮机前轴承振动1报警"><button class="btn" aria-label="展开">${icon("expand")}</button></div></div>
            <div class="field"><label for="f2">${mix("ID：")}</label><div class="ctl"><input id="f2" type="text" value="1"><button class="btn spin" aria-label="调整 ID">${icon("spin", 14)}</button></div></div>
            <div class="field"><label for="f3">报警类别：</label><div class="ctl"><input id="f3" type="text" value="Warnings">${list()}</div></div>
            <div class="field"><label for="f4">报警组：</label><div class="ctl"><input id="f4" class="cjk" type="text" value="<无报警组>" disabled>${list(true)}</div></div>
            <div class="field"><label for="f5">名称</label><div class="ctl"><input id="f5" type="text" value="Discrete_alarm_1"></div></div>
          </fieldset>
        </div>
      </div>`;
  }
}

/* ---------- shell ---------- */

const EDITOR_TABS: [string, string][] = [["alarm", "离散量报警"], ["analog", "模拟量报警"], ["controller", "控制器报警"], ["sysevent", "系统事件"], ["alarmclass", "报警类别"], ["group", "报警组"]];
const MENUS = ["项目(P)", "编辑(E)", "视图(V)", "插入(I)", "在线(O)", "选项(N)", "工具(T)", "窗口(W)", "帮助(H)"];

@customElement("app-root")
class AppRoot extends LitElement {
  static styles = [shared, css`
    :host { display: grid; grid-template-rows: 23px 51px minmax(0, 1fr) 28px; height: 100vh; position: relative; overflow: hidden; background: #1a2036; }
    .title { display: flex; align-items: center; padding: 3px 4px 0 6px; color: #fff; background: linear-gradient(#8a8a8a, #5a5a5a 7px, #1c1c1c 7px); border-bottom: 1px solid #000; font-size: 14px; line-height: 16px; font-weight: 600; white-space: pre; }
    .logo { width: 16px; margin-right: 6px; font-size: 8px; line-height: 7px; font-weight: 700; text-align: center; background: #2a2e48; }
    .logo b { display: block; color: #9aa4e8; }
    .bars { display: flex; padding-right: 24px; background: #ccc; border-bottom: 1px solid #1a2036; }
    .menus { display: flex; gap: 17px; height: 27px; padding: 3px 12px 0; }
    .menus .la { font-size: 12px; }
    .menus button { height: 20px; }
    .tools { display: flex; align-items: center; gap: 8px; height: 20px; padding-left: 13px; font-size: 13px; }
    .tools button { display: flex; align-items: center; gap: 6px; }
    .tools .hist { width: 28px; gap: 4px; }
    .tools .off { color: #888; }
    .sep { width: 1px; height: 24px; margin-left: -3px; border-left: 1px dotted #888; }
    .sep.tight { margin-right: -4px; }
    .brand { margin: 13px 0 0 auto; font-size: 14px; line-height: 15px; }
    .brand b { display: block; text-align: right; font-size: 16px; color: #666; font-weight: 600; }
    .brand span { display: block; margin-right: 24px; }
    .work { display: grid; grid-template-columns: 23px 363px minmax(0, 1fr) 24px; min-height: 0; }
    .rail { background: #b0b0b0; color: #fff; }
    .rail .stub { height: 25px; border-bottom: 1px solid #fff; }
    .rail .vis { display: flex; align-items: flex-start; justify-content: center; width: 22px; height: 221px; border-bottom: 1px solid #fff; background: #b0b0b0; }
    .rail .vis span { margin-top: 86px; writing-mode: vertical-rl; text-orientation: sideways; transform: rotate(180deg); font-size: 15px; font-weight: 500; line-height: 20px; }
    .rail.r .stub { display: flex; align-items: center; height: 30px; padding: 0 0 6px 2px; border: 0; }
    .rail .side { display: flex; flex-direction: column; align-items: center; gap: 5px; width: 21px; height: 74px; margin-bottom: 2px; padding: 3px 1px; border: 1px solid #707070; border-left: 0; background: #e0e0e0; color: #000; }
    .rail .side span { writing-mode: vertical-rl; text-orientation: sideways; font-size: 15px; font-weight: 700; line-height: 16px; }
    .rail .side.lib { height: 58px; color: #444; }
    .left { display: flex; flex-direction: column; min-height: 0; margin-left: 1px; background: #e9e9e9; }
    .left .tabs { padding-left: 6px; }
    .left .tabs .tab { width: 63px; padding-left: 11px; font-size: 14px; }
    .bar { display: flex; align-items: center; gap: 8px; height: 27px; padding: 0 4px 0 7px; background: #e9e9e9; flex: none; }
    .main .bar { padding-right: 16px; }
    .band { height: 21px; padding-left: 24px; background: #d9d9d9; font-size: 15px; line-height: 19px; font-weight: 700; flex: none; }
    .tree { display: flex; flex: 1; min-height: 0; padding: 1px 1px 1px 0; background: #f0f0f0; }
    .tree nav-tree { flex: 1; padding-left: 1px; }
    .tree .gut { width: 19px; border-left: 1px solid #ccc; background: repeating-linear-gradient(#f0f0f0 0 18px, #fff 18px 19px); flex: none; }
    .tree .sb .thumb { height: 382px; margin-top: 1px; }
    .details { display: flex; flex-direction: column; height: 263px; border-top: 3px solid #1a2036; background: #e9e9e9; flex: none; }
    .dhead { display: flex; height: 21px; border-bottom: 1px solid #707070; background: linear-gradient(#f0f0f0, #d0d0d0); font-size: 15px; font-weight: 700; line-height: 19px; flex: none; }
    .dhead button { display: flex; align-items: center; width: 21px; padding-left: 2px; margin-right: 4px; border-right: 1px solid #707070; }
    .dtable { flex: 1; margin-top: 25px; overflow: hidden; background: repeating-linear-gradient(#f0f0f0 0 18px, #fff 18px 19px) 0 1px; }
    .dtable td { border-right: 0; }
    .d1 { width: 19px; } .d2 { width: 160px; }
    .sel td { background: #d2d7dc; color: #777; }
    .sel td:last-child { background: none; }
    .sel td.nm { outline: 1px dotted #fff; outline-offset: -1px; }
    .main { display: flex; flex-direction: column; min-width: 0; min-height: 0; border: solid #1a2036; border-width: 0 1px 0 3px; background: #e9e9e9; }
    .crumb { display: flex; align-items: center; gap: 5px; flex: 1; }
    .main .tabs { justify-content: flex-end; padding-right: 6px; }
    .main .tabs .tab { padding-left: 2px; padding-right: 19px; }
    .canvas { position: relative; display: flex; flex: 1; min-height: 0; }
    alarm-table { flex: 1; min-width: 0; }
    tag-picker { position: absolute; left: 423px; top: 38px; width: 652px; height: 366px; z-index: 2; }
    alarm-inspector { height: 308px; border-top: 3px solid #1a2036; flex: none; }
    .status { display: flex; align-items: center; gap: 3px; padding: 0 138px 0 30px; background: #1c1c1c; color: #fff; }
    .status > button { display: flex; align-items: center; height: 20px; }
    .portal { gap: 6px; width: 148px; font-size: 15px; font-weight: 500; }
    .portal .la { font-size: 14px; font-weight: 600; }
    .open { gap: 4px; width: 113px; padding-left: 3px; background: #c3c3c3; color: #000; font-size: 13px; }
    .open .la { font-size: 12px; }
    .open.on { background: #fff; font-weight: 700; }
    .msg { display: flex; align-items: center; gap: 5px; margin-left: auto; font-size: 13px; }
    .msg .la { font-size: 12px; }
    .ball { position: absolute; right: -28px; bottom: 46px; width: 47px; height: 47px; padding-left: 4px; border: 2px solid #f4f4f4; border-radius: 50%; background: radial-gradient(circle at 50% 0, #b8ecb8, #4cc866 45%, #3fb85a); box-shadow: inset 0 0 0 1px #2a8a50, 0 2px 5px rgba(0, 0, 0, .5); color: #fff; font-size: 12px; font-weight: 700; line-height: 42px; text-align: left; }
  `];

  private tool(name: string, label: string) {
    return html`<button aria-label=${label}>${icon(name)}</button>`;
  }

  private hist(flip: boolean, label: string) {
    const arrow = svg`<path d="M1 2v6h6z" fill="#777"/><path d="M3 6.500C6 3 13 3 13 8c0 3-2 5-5 6" fill="none" stroke="#777" stroke-width="2.600"/>`;
    return html`<button class="hist" aria-label=${label}>
      <svg class="ico" width="16" height="16" viewBox="0 0 16 16"><g transform=${flip ? "translate(16 0) scale(-1 1)" : "translate(0 0)"}>${arrow}</g></svg>
      <svg class="ico" width="8" height="16" viewBox="0 0 8 16"><path d="M3 3h2v4h2.500L4 11 .5 7H3zM.5 12h7v2h-7z" fill="#777"/></svg>
    </button>`;
  }

  private renderTop(): TemplateResult {
    const sep = html`<span class="sep"></span>`;
    const tight = html`<span class="sep tight"></span>`;
    return html`
      <header class="title">
        <span class="logo">TIA<b>V13</b></span><span class="fill">Siemens  -  2016.1.8</span>
        <button aria-label="最小化">${icon("minthin")}</button><button aria-label="还原">${icon("restore", 15)}</button><button aria-label="关闭">${icon("close")}</button>
      </header>
      <div class="bars">
        <div>
          <nav class="menus">${MENUS.map((m) => html`<button>${mix(m)}</button>`)}</nav>
          <div class="tools">
            ${this.tool("newp", "新建")}${this.tool("open", "打开")}<button>${icon("save")}<span>保存项目</span></button>${this.tool("print", "打印")}
            ${sep}${this.tool("cut", "剪切")}${this.tool("copy", "复制")}${this.tool("paste", "粘贴")}${this.tool("del", "删除")}
            ${tight}${this.hist(false, "撤销")}${this.hist(true, "重做")}
            ${sep}${this.tool("find", "查找")}
            ${sep}${this.tool("compile", "编译")}${this.tool("download", "下载")}${this.tool("upload", "上传")}${this.tool("simulate", "仿真")}${this.tool("rt", "启动运行系统")}
            ${tight}<button class="off">${icon("plug")}<span>转到在线</span></button><button class="off">${icon("unplug")}<span>转到离线</span></button>
            ${sep}${this.tool("access", "可访问的设备")}${this.tool("start", "启动")}${this.tool("stop", "停止")}
            ${sep}${this.tool("xref", "交叉引用")}
            ${sep}${this.tool("splith", "水平拆分")}${this.tool("splitv", "垂直拆分")}
          </div>
        </div>
        <div class="brand"><span>Totally Integrated Automation</span><b>PORTAL</b></div>
      </div>`;
  }

  private renderLeft(): TemplateResult {
    return html`
      <aside class="left">
        <div class="head"><span class="fill">项目树</span><button aria-label="列">${icon("columns")}</button><button aria-label="折叠">${icon("triL")}</button></div>
        <div class="tabs"><button class="tab on">设备</button></div>
        <div class="bar">${this.tool("newgray", "新建组")}${this.tool("back", "后退")}${this.tool("fwd", "前进")}<span class="fill"></span>${this.tool("calendar", "显示")}</div>
        <div class="band"></div>
        <div class="tree">
          <nav-tree .nodes=${PROJECT}></nav-tree>
          <div class="gut"></div>
          <div class="sb">
            <button class="btn" aria-label="向上滚动">${icon("chevU", 14)}</button>
            <div class="thumb"></div>
            <span class="fill"></span>
            <button class="btn" aria-label="向下滚动">${icon("chevD", 14)}</button>
          </div>
        </div>
        <section class="details">
          <div class="dhead"><button aria-label="折叠">${icon("chevB")}</button>详细视图</div>
          <div class="dtable"><table>
            <colgroup><col class="d1"><col class="d2"><col></colgroup>
            <thead><tr><th></th><th>名称</th><th></th></tr></thead>
            <tbody>${["Diagnosis events", "Errors", "System", "Warnings"].map((t, i) => html`
              <tr class=${i ? "" : "sel"}><td class="ic">${icon("alarmclass")}</td><td class="nm la">${t}</td><td></td></tr>`)}</tbody>
          </table></div>
        </section>
      </aside>`;
  }

  private renderMain(): TemplateResult {
    return html`
      <main class="main">
        <div class="head dark">
          <span class="crumb"><span>${mix("2016.1.8")}</span>${icon("triR")}<span>${mix("HMI_1 [TP1200 Comfort]")}</span>${icon("triR")}<span>${mix("HMI 报警")}</span></span>
          <button aria-label="最小化">${icon("min", 15)}</button><button aria-label="浮动">${icon("restore", 15)}</button><button aria-label="最大化">${icon("max", 15)}</button><button aria-label="关闭">${icon("close", 15)}</button>
        </div>
        <div class="tabs">${EDITOR_TABS.map(([ic, t], i) => html`<button class=${classMap({ tab: true, on: i === 0 })}>${icon(ic)}<span>${t}</span></button>`)}</div>
        <div class="bar">${this.tool("insert", "插入")}${this.tool("remove", "移除")}<span class="fill"></span>${this.tool("viewcfg", "视图设置")}</div>
        <div class="band">离散量报警</div>
        <div class="canvas"><alarm-table></alarm-table><tag-picker></tag-picker></div>
        <alarm-inspector></alarm-inspector>
      </main>`;
  }

  render() {
    return html`
      ${this.renderTop()}
      <div class="work">
        <div class="rail"><div class="stub"></div><button class="vis"><span>可视化</span></button></div>
        ${this.renderLeft()}${this.renderMain()}
        <div class="rail r">
          <div class="stub">${icon("triL")}</div>
          <button class="side">${icon("task")}<span>任务</span></button>
          <button class="side lib">${icon("book")}<span>库</span></button>
        </div>
      </div>
      <footer class="status">
        <button class="portal">${icon("triL")}<span>${mix("Portal 视图")}</span></button>
        <button class="open">${icon("overview")}<span>总览</span></button>
        <button class="open on">${icon("envelope")}<span>${mix("HMI 报警")}</span></button>
        <button class="open">${icon("tagtable")}<span>${mix("HMI报警")}</span></button>
        <span class="msg">${icon("done")}<span>${mix("项目 2016.1.8 已打开。")}</span></span>
      </footer>
      <button class="ball">75</button>`;
  }
}
